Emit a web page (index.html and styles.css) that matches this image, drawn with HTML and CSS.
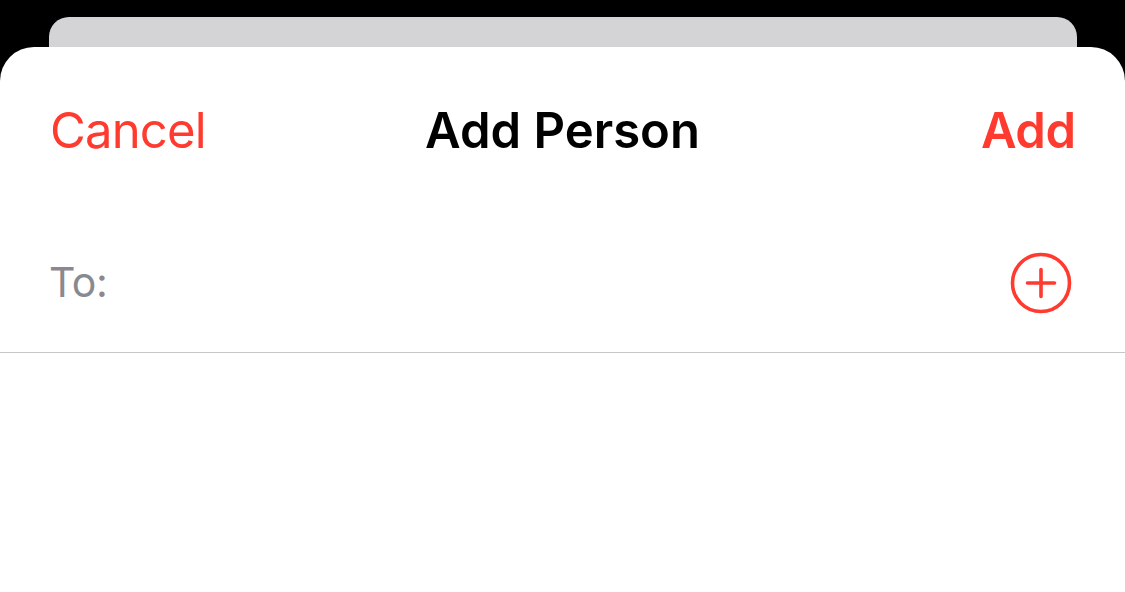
FILE: index.html
```html
<!DOCTYPE html>
<html lang="en">
<head>
<meta charset="utf-8">
<title>Add Person</title>
<link rel="stylesheet" href="styles.css">
</head>
<body>
<div class="back-card"></div>
<div class="sheet">
  <div class="nav">
    <span class="nav-btn cancel">Cancel</span>
    <span class="nav-title">Add Person</span>
    <span class="nav-btn add">Add</span>
  </div>
  <div class="to-row">
    <span class="to-label">To:</span>
    <svg class="plus-icon" width="62" height="62" viewBox="0 0 62 62" aria-hidden="true">
      <circle cx="31" cy="31" r="28.5" fill="none" stroke="#ff3b30" stroke-width="3.6"/>
      <path d="M31 17.5V44.5M17.5 31H44.5" fill="none" stroke="#ff3b30" stroke-width="3.6" stroke-linecap="round"/>
    </svg>
  </div>
</div>
</body>
</html>
```
FILE: styles.css
```css
html, body {
  margin: 0;
  padding: 0;
  height: 100%;
}
body {
  background: #000;
  font-family: "Inter", "Liberation Sans", Arial, sans-serif;
  overflow: hidden;
}
.back-card {
  margin: 17px 48px 0 49px;
  height: 30px;
  background: #d4d4d6;
  border-radius: 20px 20px 0 0;
}
.sheet {
  background: #fff;
  height: 545px;
  border-radius: 34px 34px 0 0;
}
.nav {
  height: 166px;
  display: grid;
  grid-template-columns: 1fr auto 1fr;
  align-items: center;
  padding: 0 50px;
}
.nav-btn {
  color: #ff3b30;
  font-size: 49px;
  line-height: 1;
}
.cancel {
  font-weight: 400;
  justify-self: start;
  letter-spacing: -0.8px;
}
.add {
  font-weight: 600;
  justify-self: end;
  letter-spacing: -0.5px;
  margin-right: -0.5px;
}
.nav-title {
  font-size: 49px;
  line-height: 1;
  font-weight: 600;
  color: #000;
}
.to-row {
  height: 139px;
  display: flex;
  align-items: center;
  justify-content: space-between;
  padding: 0 53px 0 49px;
  border-bottom: 1px solid #c6c6c8;
}
.to-label {
  color: #8a8a8e;
  font-size: 41px;
  line-height: 1;
  letter-spacing: -0.4px;
}
.plus-icon {
  display: block;
}
```
